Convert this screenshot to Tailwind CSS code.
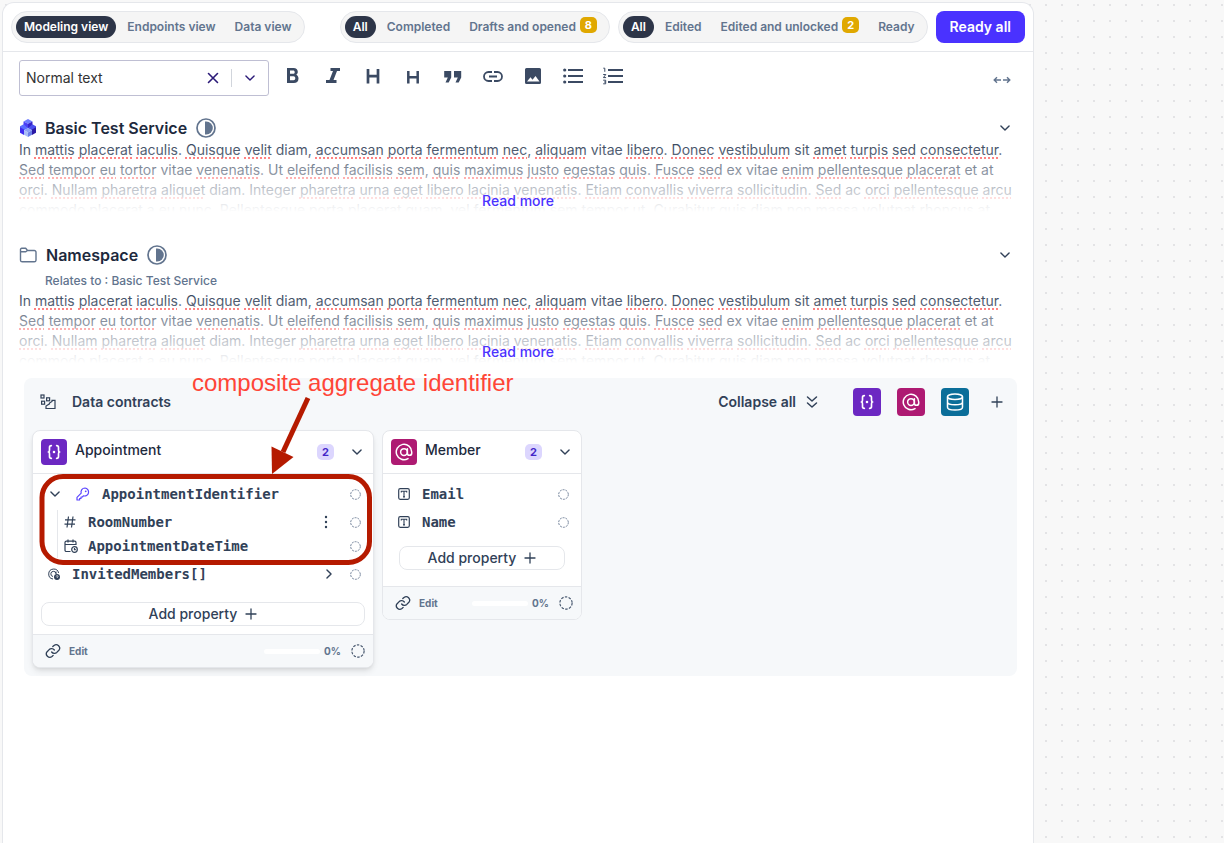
<!DOCTYPE html>
<html lang="en">
<head>
<meta charset="utf-8">
<meta name="viewport" content="width=device-width, initial-scale=1">
<title>Modeling view</title>
<script src="https://cdn.jsdelivr.net/npm/@tailwindcss/browser@4"></script>
</head>
<body class="flex min-h-screen bg-[#f8f8f8] bg-[conic-gradient(from_270deg_at_2px_2px,#e3e3e5_90deg,transparent_90deg)] bg-[size:16px_16px] bg-[position:5px_4px] pt-[2px] pl-[2px] font-['Inter',sans-serif] text-sm text-slate-700">

<svg class="hidden" aria-hidden="true">
  <symbol id="chev" viewBox="0 0 24 24"><path d="M5 8.500l7 7 7-7" fill="none" stroke="currentColor" stroke-width="2.400" stroke-linecap="round" stroke-linejoin="round"/></symbol>
  <symbol id="plus" viewBox="0 0 24 24"><path d="M12 2v20M2 12h20" fill="none" stroke="currentColor" stroke-width="2.600" stroke-linecap="round"/></symbol>
  <symbol id="braces" viewBox="0 0 24 24"><g fill="none" stroke="currentColor" stroke-width="2.200" stroke-linecap="round" stroke-linejoin="round"><path d="M8.500 3.500C6.500 3.500 6 4.500 6 6v3c0 2-.6 3-1.600 3 1 0 1.600 1 1.600 3v3c0 1.500.5 2.500 2.500 2.500"/><path d="M15.500 3.500C17.500 3.500 18 4.500 18 6v3c0 2 .6 3 1.600 3-1 0-1.600 1-1.600 3v3c0 1.500-.5 2.500-2.500 2.500"/></g><rect x="10.500" y="10.500" width="3" height="3" fill="currentColor"/></symbol>
  <symbol id="at" viewBox="0 0 24 24"><g fill="none" stroke="currentColor" stroke-width="2" stroke-linecap="round"><circle cx="12" cy="12" r="4.500"/><path d="M16.500 7.500v6a2.900 2.900 0 0 0 5.800 0V12a10.300 10.300 0 1 0-5 8.800"/></g></symbol>
  <symbol id="db" viewBox="0 0 24 24"><g fill="none" stroke="currentColor" stroke-width="2"><ellipse cx="12" cy="5" rx="10" ry="3.700"/><path d="M2 5v14c0 2.200 4.500 3.700 10 3.700s10-1.500 10-3.700V5M2 12c0 2.200 4.500 3.700 10 3.700s10-1.500 10-3.700"/></g></symbol>
  <symbol id="ring" viewBox="0 0 24 24"><circle cx="12" cy="12" r="10.500" fill="none" stroke="currentColor" stroke-width="2" stroke-dasharray="4.300 2.300"/></symbol>
  <symbol id="chain" viewBox="0 0 24 24"><g fill="none" stroke="currentColor" stroke-width="2" stroke-linecap="round" stroke-linejoin="round"><path d="M10 13.500a5.200 5.200 0 0 0 7.700.6l3.100-3.100a5.200 5.200 0 0 0-7.300-7.300l-1.800 1.700"/><path d="M14 10.500a5.200 5.200 0 0 0-7.700-.6L3.200 13a5.200 5.200 0 0 0 7.300 7.300l1.700-1.700"/></g></symbol>
  <symbol id="half" viewBox="0 0 20 20"><circle cx="10" cy="10" r="9" fill="none" stroke="currentColor" stroke-width="1.700"/><path d="M9 3.500h1.300a6.500 6.500 0 0 1 0 13H9z" fill="currentColor"/></symbol>
  <symbol id="tbox" viewBox="0 0 12 12"><rect x=".7" y=".7" width="10.600" height="10.600" rx="1.500" fill="none" stroke="currentColor" stroke-width="1.200"/><path d="M3.300 4.400V3.300h5.400v1.100M6 3.300v5.600M5 8.900h2" fill="none" stroke="currentColor" stroke-width="1.100"/></symbol>
</svg>

<main class="min-w-0 flex-1 rounded-t-xl border border-b-0 border-gray-200 bg-white">
  <header class="flex h-[49px] items-center justify-between border-b border-gray-200 px-2">
    <nav aria-label="Views" class="flex h-8 items-center gap-[3px] rounded-full border border-gray-200 bg-[#f5f5f5] px-1 text-xs font-semibold text-slate-500">
      <button class="h-[22px] rounded-full bg-[#2d3548] px-2 text-white">Modeling view</button>
      <button class="h-[22px] px-2">Endpoints view</button>
      <button class="h-[22px] px-2">Data view</button>
    </nav>
    <div class="flex gap-2">
      <div class="flex h-8 items-center gap-[3px] rounded-full border border-gray-200 bg-[#f5f5f5] px-1 text-xs font-semibold text-slate-500">
        <button class="h-[22px] rounded-full bg-[#2d3548] px-2 text-white">All</button>
        <button class="h-[22px] px-2">Completed</button>
        <button class="flex h-[22px] items-center gap-1 px-2">Drafts and opened <span class="mb-1 h-4 w-[17px] rounded-[5px] bg-[#e0a800] text-center text-[11px] leading-4 font-bold text-white">8</span></button>
      </div>
      <div class="flex h-8 items-center gap-[3px] rounded-full border border-gray-200 bg-[#f5f5f5] px-1 text-xs font-semibold text-slate-500">
        <button class="h-[22px] rounded-full bg-[#2d3548] px-2 text-white">All</button>
        <button class="h-[22px] px-2">Edited</button>
        <button class="flex h-[22px] items-center gap-1 px-2">Edited and unlocked <span class="mb-1 h-4 w-[17px] rounded-[5px] bg-[#e0a800] text-center text-[11px] leading-4 font-bold text-white">2</span></button>
        <button class="h-[22px] px-2">Ready</button>
      </div>
      <button class="h-8 rounded-lg bg-[#4a32ff] px-3.5 text-sm font-semibold text-white">Ready all</button>
    </div>
  </header>

  <div class="flex items-center px-4 pt-2">
    <div class="flex h-9 w-[250px] items-center rounded-[3px] border border-[#bfbfd3] pr-[11px] pl-1.5 text-[#2b1a78]">
      <select aria-label="Text style" class="min-w-0 flex-1 appearance-none text-sm text-[#333]"><option>Normal text</option></select>
      <button aria-label="Clear"><svg class="size-3" viewBox="0 0 12 12"><path d="M1.500 1.500l9 9M10.500 1.500l-9 9" stroke="currentColor" stroke-width="1.600" stroke-linecap="round"/></svg></button>
      <span class="mr-[11px] ml-3 h-[18px] w-px bg-gray-300"></span>
      <svg class="size-3.5"><use href="#chev"/></svg>
    </div>
    <div class="mb-1 ml-3.5 flex gap-5 text-[#3b4a63]">
      <button aria-label="Bold"><svg class="size-5" viewBox="0 0 20 20"><path fill-rule="evenodd" fill="currentColor" d="M4 2h6.600c2.500 0 4.200 1.500 4.200 3.800 0 1.300-.6 2.300-1.600 2.900 1.400.6 2.300 1.900 2.300 3.700 0 2.900-1.900 4.600-4.700 4.600H4zM7 4.600v3.200h3.100c1 0 1.600-.6 1.600-1.600s-.6-1.600-1.600-1.600zm0 5.700v4h3.500c1.100 0 1.800-.8 1.800-2s-.7-2-1.800-2z"/></svg></button>
      <button aria-label="Italic"><svg class="size-5" viewBox="0 0 20 20"><path fill="currentColor" d="M7.500 2H17v3h-3l-3.500 9h3v3H3v-3h3.500L10 5H7.500z"/></svg></button>
      <button aria-label="Heading 1"><svg class="size-5" viewBox="0 0 20 20"><path d="M5 3v14.500M15 3v14.500M5 10.200h10" stroke="currentColor" stroke-width="2.700"/></svg></button>
      <button aria-label="Heading 2"><svg class="size-5" viewBox="0 0 20 20"><path d="M5.300 5v12.500M14.700 5v12.500M5.300 11.200h9.400" stroke="currentColor" stroke-width="2.500"/></svg></button>
      <button aria-label="Quote"><svg class="size-5" viewBox="0 0 20 20"><path fill="currentColor" d="M1.200 5h7v6.500l-2.500 5H2.500l2.300-5H1.200zM11 5h7.200v6.500l-2.500 5h-3.200l2.300-5H11z"/></svg></button>
      <button aria-label="Link"><svg class="size-5" viewBox="0 0 20 20"><path fill="none" stroke="currentColor" stroke-width="1.800" d="M9 6H5.500a4.500 4.500 0 0 0 0 9H9M11 6h3.500a4.500 4.500 0 0 1 0 9H11M6 10.500h8"/></svg></button>
      <button aria-label="Image"><svg class="size-5" viewBox="0 0 20 20"><path fill="currentColor" fill-rule="evenodd" d="M3.500 2h13A1.500 1.500 0 0 1 18 3.500v13a1.500 1.500 0 0 1-1.500 1.500h-13A1.500 1.500 0 0 1 2 16.500v-13A1.500 1.500 0 0 1 3.500 2zM4 15.500h12.500l-4-5.500-3 3.700-2-2.500z"/></svg></button>
      <button aria-label="Bulleted list"><svg class="size-5" viewBox="0 0 20 20"><path d="M5 4h15M5 10h15M5 16h15" stroke="currentColor" stroke-width="2"/><g fill="currentColor"><circle cx="1.700" cy="4" r="1.600"/><circle cx="1.700" cy="10" r="1.600"/><circle cx="1.700" cy="16" r="1.600"/></g></svg></button>
      <button aria-label="Numbered list"><svg class="size-5" viewBox="0 0 20 20"><path d="M5 4h15M5 10h15M5 16h15" stroke="currentColor" stroke-width="2"/><path d="M.3 2.200h1.500v3.600M.2 8.500h2.600L.4 11.600h2.700M.2 14.200h2.500v3.600H.2M1 16h1.700" fill="none" stroke="currentColor" stroke-width="1"/></svg></button>
    </div>
    <button aria-label="Expand width" class="mt-1 mr-1.5 ml-auto text-slate-500"><svg class="h-2 w-[18px]" viewBox="0 0 18 8"><path d="M8 4H1.500M4 1.200L1.200 4 4 6.800M10 4h6.500M14 1.200L16.800 4 14 6.800" fill="none" stroke="currentColor" stroke-width="1.400"/></svg></button>
  </div>

  <section class="px-4 pt-5">
    <div class="flex h-6 items-center">
      <svg class="h-[18px] w-[18px]" viewBox="0 0 18 18"><path fill="#6f7dff" d="M9 0l4.500 2.400L9 4.700 4.500 2.400z"/><path fill="#4a3df5" d="M4.500 2.400L9 4.700v4.600L4.500 7z"/><path fill="#3623c9" d="M13.500 2.400L9 4.700v4.600L13.500 7z"/><path fill="#5b6bff" d="M1 7.200l3.700-2L9 9.300l-4.300 2.200L1 9.300z"/><path fill="#4b50ee" d="M17 7.200l-3.700-2L9 9.300l4.300 2.200L17 9.300z"/><path fill="#3f2bf0" d="M1 8.200l4 2.400v5.400l-4-2.300z"/><path fill="#2a19a5" d="M17 8.200l-4 2.400v5.400l4-2.300z"/><path fill="#8ea2f5" d="M9 8.900l4 2.300-4 2.200-4-2.200z"/><path fill="#a8bdf8" d="M5 11.200l4 2.200V18l-4-2.300z"/><path fill="#6b7fe8" d="M13 11.200l-4 2.200V18l4-2.300z"/></svg>
      <h1 class="ml-2 text-base font-semibold text-slate-800">Basic Test Service</h1>
      <svg class="ml-[9px] size-5 text-slate-500"><use href="#half"/></svg>
      <button aria-label="Toggle section" class="mr-[5px] ml-auto"><svg class="size-3.5"><use href="#chev"/></svg></button>
    </div>
    <div class="relative h-[72px] overflow-hidden leading-5 whitespace-nowrap text-slate-700 [&_u]:decoration-[#ff5a5a] [&_u]:decoration-dotted [&_u]:decoration-2 [&_u]:underline-offset-2 [&_u]:[text-decoration-skip-ink:none]">
      <p>In <u>mattis</u> <u>placerat</u> <u>iaculis</u>. <u>Quisque</u> <u>velit</u> diam, <u>accumsan</u> <u>porta</u> <u>fermentum</u> <u>nec</u>, <u>aliquam</u> vitae <u>libero</u>. <u>Donec</u> <u>vestibulum</u> sit <u>amet</u> <u>turpis</u> <u>sed</u> <u>consectetur</u>.<br>
      <u>Sed</u> <u>tempor</u> <u>eu</u> <u>tortor</u> vitae <u>venenatis</u>. Ut <u>eleifend</u> <u>facilisis</u> <u>sem</u>, <u>quis</u> <u>maximus</u> <u>justo</u> <u>egestas</u> <u>quis</u>. <u>Fusce</u> <u>sed</u> ex vitae <u>enim</u> <u>pellentesque</u> <u>placerat</u> et at<br>
      <u>orci</u>. <u>Nullam</u> <u>pharetra</u> <u>aliquet</u> diam. Integer <u>pharetra</u> <u>urna</u> <u>eget</u> <u>libero</u> <u>lacinia</u> <u>venenatis</u>. <u>Etiam</u> <u>convallis</u> <u>viverra</u> <u>sollicitudin</u>. <u>Sed</u> ac <u>orci</u> <u>pellentesque</u> <u>arcu</u><br>
      commodo placerat a eu nunc. Pellentesque porta placerat quam, vel fermentum sem tempor ut. Curabitur quis diam non massa volutpat rhoncus at</p>
      <div class="absolute inset-0 flex items-end justify-center bg-linear-to-b from-white/0 to-white pb-px"><a href="#" class="font-medium text-[#4a32ff]">Read more</a></div>
    </div>
  </section>

  <section class="px-4 pt-[31px]">
    <div class="flex h-6 items-center">
      <svg class="h-4 w-[18px] text-slate-500" viewBox="0 0 18 16"><path d="M1.500 4.800V2.500A1.200 1.200 0 0 1 2.700 1.300h4l1.800 2.200h6.800a1.700 1.700 0 0 1 1.700 1.700v8a1.700 1.700 0 0 1-1.700 1.600H3.200a1.700 1.700 0 0 1-1.700-1.600V4.800h5.300l1.700-1.300" fill="none" stroke="currentColor" stroke-width="1.400" stroke-linejoin="round"/></svg>
      <h2 class="ml-[9px] text-base font-semibold text-slate-800">Namespace</h2>
      <svg class="ml-[9px] size-5 text-slate-500"><use href="#half"/></svg>
      <button aria-label="Toggle section" class="mr-[5px] ml-auto"><svg class="size-3.5"><use href="#chev"/></svg></button>
    </div>
    <p class="pt-1.5 pb-0.5 pl-[26px] text-xs font-medium text-slate-500">Relates to : Basic Test Service</p>
    <div class="relative h-[72px] overflow-hidden leading-5 whitespace-nowrap text-slate-700 [&_u]:decoration-[#ff5a5a] [&_u]:decoration-dotted [&_u]:decoration-2 [&_u]:underline-offset-2 [&_u]:[text-decoration-skip-ink:none]">
      <p>In <u>mattis</u> <u>placerat</u> <u>iaculis</u>. <u>Quisque</u> <u>velit</u> diam, <u>accumsan</u> <u>porta</u> <u>fermentum</u> <u>nec</u>, <u>aliquam</u> vitae <u>libero</u>. <u>Donec</u> <u>vestibulum</u> sit <u>amet</u> <u>turpis</u> <u>sed</u> <u>consectetur</u>.<br>
      <u>Sed</u> <u>tempor</u> <u>eu</u> <u>tortor</u> vitae <u>venenatis</u>. Ut <u>eleifend</u> <u>facilisis</u> <u>sem</u>, <u>quis</u> <u>maximus</u> <u>justo</u> <u>egestas</u> <u>quis</u>. <u>Fusce</u> <u>sed</u> ex vitae <u>enim</u> <u>pellentesque</u> <u>placerat</u> et at<br>
      <u>orci</u>. <u>Nullam</u> <u>pharetra</u> <u>aliquet</u> diam. Integer <u>pharetra</u> <u>urna</u> <u>eget</u> <u>libero</u> <u>lacinia</u> <u>venenatis</u>. <u>Etiam</u> <u>convallis</u> <u>viverra</u> <u>sollicitudin</u>. <u>Sed</u> ac <u>orci</u> <u>pellentesque</u> <u>arcu</u><br>
      commodo placerat a eu nunc. Pellentesque porta placerat quam, vel fermentum sem tempor ut. Curabitur quis diam non massa volutpat rhoncus at</p>
      <div class="absolute inset-0 flex items-end justify-center bg-linear-to-b from-white/0 to-white pb-px"><a href="#" class="font-medium text-[#4a32ff]">Read more</a></div>
    </div>
  </section>

  <section class="relative mt-[15px] mr-4 ml-[21px] rounded-lg bg-[#f6f8fa] px-2 pb-2">
    <div class="flex h-12 items-center pl-2 font-semibold">
      <svg class="size-4" viewBox="0 0 16 16"><g fill="none" stroke="currentColor" stroke-width="1.200"><rect x="1" y="1" width="3" height="3"/><rect x="1.600" y="7.200" width="3" height="3"/><rect x="6.600" y="3.800" width="3" height="3"/><path d="M6 14.500V12l3.500-2.200V9L12 7.500V6.300h3v8.200z"/></g></svg>
      <h3 class="ml-4">Data contracts</h3>
      <button class="ml-auto flex items-center gap-2">Collapse all <svg class="h-4 w-4" viewBox="0 0 16 16"><path d="M3.500 3L8 7l4.500-4M3.500 9L8 13l4.500-4" fill="none" stroke="currentColor" stroke-width="1.500" stroke-linecap="round" stroke-linejoin="round"/></svg></button>
      <div class="ml-[33px] flex gap-4 text-white">
        <button aria-label="Add aggregate" class="flex size-7 items-center justify-center rounded bg-[#6c28c2]"><svg class="size-[18px]"><use href="#braces"/></svg></button>
        <button aria-label="Add entity" class="flex size-7 items-center justify-center rounded bg-[#ae1a72]"><svg class="size-[18px]"><use href="#at"/></svg></button>
        <button aria-label="Add store" class="flex size-7 items-center justify-center rounded bg-[#0b6e99]"><svg class="size-[18px]"><use href="#db"/></svg></button>
      </div>
      <button aria-label="Add" class="mr-1.5 ml-[22px]"><svg class="size-3"><use href="#plus"/></svg></button>
    </div>

    <div class="flex items-start gap-2 pt-1">
      <article class="w-[342px] overflow-hidden rounded-lg border border-gray-200 bg-white shadow-md">
        <div class="flex h-[43px] items-center border-b border-gray-200 pr-[9px] pl-2">
          <span class="flex size-[26px] items-center justify-center rounded bg-[#6c28c2] text-white"><svg class="size-[18px]"><use href="#braces"/></svg></span>
          <h4 class="mb-1 ml-2 font-medium text-slate-800">Appointment</h4>
          <span class="ml-auto h-4 w-[17px] rounded-[5px] bg-[#dcd6fe] text-center text-[11px] leading-4 font-bold text-[#4326c9]">2</span>
          <button aria-label="Collapse" class="ml-4"><svg class="size-3.5"><use href="#chev"/></svg></button>
        </div>
        <div class="px-2 pt-1.5 pb-2 font-['DejaVu_Sans_Mono',monospace] font-bold text-slate-700">
          <div class="flex h-7 items-center pr-1">
            <button aria-label="Collapse property" class="ml-[7px]"><svg class="size-3.5"><use href="#chev"/></svg></button>
            <svg class="ml-3.5 size-3.5 text-[#5b45ff]" viewBox="0 0 14 14"><path d="M9 1a4 4 0 0 0-3.800 5.200L1 10.400V13h2.600v-1.500H5V10h1.400l1-1.200A4 4 0 1 0 9 1z" fill="none" stroke="currentColor" stroke-width="1.200" stroke-linejoin="round"/><circle cx="9.700" cy="4.300" r=".9" fill="currentColor"/></svg>
            <span class="ml-3">AppointmentIdentifier</span>
            <svg class="ml-auto size-[11px] text-slate-500"><use href="#ring"/></svg>
          </div>
          <div class="my-0.5 ml-4 border-l border-gray-200 pl-1">
            <div class="flex h-6 items-center pr-1">
              <svg class="ml-0.5 size-3" viewBox="0 0 12 12"><path d="M4.500.5L3 11.500M9 .5L7.500 11.500M1 3.800h10.500M.5 8.200H11" fill="none" stroke="currentColor" stroke-width="1.200"/></svg>
              <span class="ml-3">RoomNumber</span>
              <button aria-label="More" class="ml-auto"><svg class="h-3.5 w-1" viewBox="0 0 4 14"><g fill="currentColor"><circle cx="2" cy="2" r="1.200"/><circle cx="2" cy="7" r="1.200"/><circle cx="2" cy="12" r="1.200"/></g></svg></button>
              <svg class="ml-[22px] size-[11px] text-slate-500"><use href="#ring"/></svg>
            </div>
            <div class="flex h-6 items-center pr-1">
              <svg class="ml-0.5 size-3.5" viewBox="0 0 14 14"><g fill="none" stroke="currentColor" stroke-width="1.200"><path d="M6.500 12.500H2.300A1.300 1.300 0 0 1 1 11.200V3.500a1.300 1.300 0 0 1 1.300-1.300h8.400A1.300 1.300 0 0 1 12 3.500V6M1 5.500h11M4 .5v3M9 .5v3"/><circle cx="10.500" cy="10.500" r="2.800"/><path d="M10.500 9v1.700h1.300"/></g></svg>
              <span class="ml-2.5">AppointmentDateTime</span>
              <svg class="ml-auto size-[11px] text-slate-500"><use href="#ring"/></svg>
            </div>
          </div>
          <div class="flex h-7 items-center pr-1">
            <svg class="ml-[7px] size-3" viewBox="0 0 12 12"><g fill="none" stroke="currentColor" stroke-width="1"><path d="M5 11A5 5 0 1 1 10.600 5"/><path d="M5 8.500A2.600 2.600 0 1 1 8 5.500M8 3.500V6"/></g><circle cx="9" cy="9" r="3" fill="currentColor"/><path d="M8.200 8.500a.9.9 0 1 1 .9.900v.6" fill="none" stroke="#fff" stroke-width=".7"/></svg>
            <span class="ml-3">InvitedMembers[]</span>
            <button aria-label="Expand property" class="ml-auto"><svg class="size-3.5 -rotate-90"><use href="#chev"/></svg></button>
            <svg class="ml-3.5 size-[11px] text-slate-500"><use href="#ring"/></svg>
          </div>
          <button class="mt-3.5 flex h-6 w-full items-center justify-center gap-2 rounded-lg border border-gray-200 font-['Inter',sans-serif] font-medium">Add property <svg class="size-3"><use href="#plus"/></svg></button>
        </div>
        <footer class="flex h-[33px] items-center border-t border-gray-200 bg-[#f6f8fa] pr-2 pl-3 text-[10px] font-bold text-slate-500">
          <svg class="size-4 text-slate-700"><use href="#chain"/></svg>
          <button class="ml-2">Edit</button>
          <span class="ml-auto h-[5px] w-14 rounded-full bg-white"></span>
          <span class="ml-1">0%</span>
          <svg class="ml-2.5 size-3.5 text-slate-600"><use href="#ring"/></svg>
        </footer>
      </article>

      <article class="w-[200px] overflow-hidden rounded-lg border border-gray-200 bg-white">
        <div class="flex h-[43px] items-center border-b border-gray-200 pr-[9px] pl-2">
          <span class="flex size-[26px] items-center justify-center rounded bg-[#ae1a72] text-white"><svg class="size-[18px]"><use href="#at"/></svg></span>
          <h4 class="mb-1 ml-2 font-medium text-slate-800">Member</h4>
          <span class="ml-auto h-4 w-[17px] rounded-[5px] bg-[#dcd6fe] text-center text-[11px] leading-4 font-bold text-[#4326c9]">2</span>
          <button aria-label="Collapse" class="ml-4"><svg class="size-3.5"><use href="#chev"/></svg></button>
        </div>
        <div class="px-2 pt-1.5 pb-4 font-['DejaVu_Sans_Mono',monospace] font-bold text-slate-700">
          <div class="flex h-7 items-center pr-1"><svg class="ml-[7px] size-3"><use href="#tbox"/></svg><span class="ml-3">Email</span><svg class="ml-auto size-[11px] text-slate-500"><use href="#ring"/></svg></div>
          <div class="flex h-7 items-center pr-1"><svg class="ml-[7px] size-3"><use href="#tbox"/></svg><span class="ml-3">Name</span><svg class="ml-auto size-[11px] text-slate-500"><use href="#ring"/></svg></div>
          <div class="px-2 pt-2.5"><button class="flex h-6 w-full items-center justify-center gap-2 rounded-lg border border-gray-200 font-['Inter',sans-serif] font-medium">Add property <svg class="size-3"><use href="#plus"/></svg></button></div>
        </div>
        <footer class="flex h-[33px] items-center border-t border-gray-200 bg-[#f6f8fa] pr-2 pl-3 text-[10px] font-bold text-slate-500">
          <svg class="size-4 text-slate-700"><use href="#chain"/></svg>
          <button class="ml-2">Edit</button>
          <span class="ml-auto h-[5px] w-14 rounded-full bg-white"></span>
          <span class="ml-1">0%</span>
          <svg class="ml-2.5 size-3.5 text-slate-600"><use href="#ring"/></svg>
        </footer>
      </article>
    </div>

    <!-- Annotation drawn over the Appointment card -->
    <div class="pointer-events-none absolute top-[-9px] left-[15px]">
      <p class="pl-[153px] font-['Liberation_Sans',sans-serif] text-2xl leading-7 whitespace-nowrap text-[#ff4537]">composite aggregate identifier</p>
      <svg class="absolute top-0 left-0 h-[198px] w-[335px]" viewBox="0 0 335 198" fill="none"><rect x="3" y="107.500" width="327.500" height="86" rx="21" stroke="#b51a00" stroke-width="5"/><path d="M269 29l-25 54" stroke="#b51a00" stroke-width="5"/><path d="M232.500 77.500l22 10.500-21.500 17z" fill="#b51a00"/></svg>
    </div>
  </section>
</main>
<aside aria-label="Canvas" class="w-[190px] shrink-0"></aside>
</body>
</html>
